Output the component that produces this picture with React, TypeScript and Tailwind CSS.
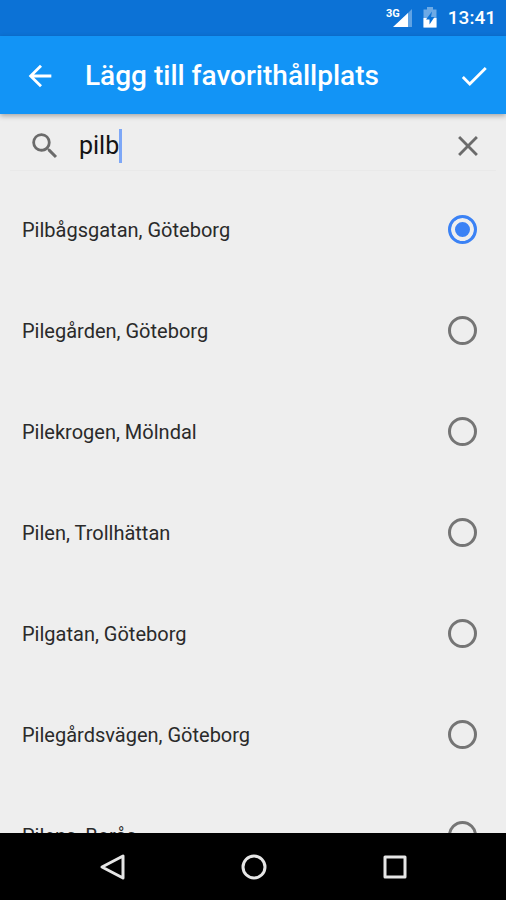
import React, { useState } from 'react';
import { MdArrowBack, MdCheck, MdClose, MdSearch } from 'react-icons/md';

const STOPS = [
  'Pilbågsgatan, Göteborg',
  'Pilegården, Göteborg',
  'Pilekrogen, Mölndal',
  'Pilen, Trollhättan',
  'Pilgatan, Göteborg',
  'Pilegårdsvägen, Göteborg',
  'Pilens, Borås',
];

function StatusBar() {
  return (
    <div className="flex h-9 shrink-0 items-center justify-end bg-[#0c72d6] pr-[10px] text-white">
      {/* Mobile signal */}
      <svg className="h-6 w-7" viewBox="0 0 28 24" aria-label="3G">
        <path d="M26 3v18H8z" fill="#fff" fillOpacity="0.35" />
        <path d="M22 7v14H7z" fill="#fff" />
        <text x="0" y="11" fontSize="11" fontWeight="700" fill="#fff" fontFamily="Roboto, sans-serif">
          3G
        </text>
      </svg>
      {/* Battery */}
      <svg className="ml-2 h-6 w-4" viewBox="0 0 16 24" aria-hidden="true">
        <path d="M5 1h6v2.500h3.500v18h-13v-18H5z" fill="#fff" fillOpacity="0.4" />
        <path d="M1.500 12h13v9.500h-13z" fill="#fff" />
        <path d="M10 5.500 4 13.500h3.500v5l5-7.500H9z" fill="#0c72d6" />
      </svg>
      <span className="ml-[10px] text-[19px] leading-6 font-medium">13:41</span>
    </div>
  );
}

function AppBar() {
  return (
    <header className="z-10 flex h-[78px] shrink-0 items-center bg-[#1294f6] pt-px pr-[15px] pl-[23px] text-white shadow-[0_2px_5px_rgba(0,0,0,0.3)]">
      <button type="button" aria-label="Tillbaka">
        <MdArrowBack className="size-[34px]" />
      </button>
      <h1 className="ml-7 flex-1 truncate text-[28px] leading-9 font-medium">Lägg till favorithållplats</h1>
      <button type="button" aria-label="Spara">
        <MdCheck className="size-[34px]" />
      </button>
    </header>
  );
}

function NavigationBar() {
  return (
    <nav className="flex h-[67px] shrink-0 items-center justify-center gap-[109px] bg-black pt-px pl-[2px]">
      <button type="button" aria-label="Bakåt">
        <svg className="size-8" viewBox="0 0 32 32" fill="none" stroke="#e6e6e6" strokeWidth="3" strokeLinejoin="round">
          <path d="M26 5v22L5 16z" />
        </svg>
      </button>
      <button type="button" aria-label="Hem">
        <svg className="size-8" viewBox="0 0 32 32" fill="none" stroke="#e6e6e6" strokeWidth="3">
          <circle cx="16" cy="16" r="11" />
        </svg>
      </button>
      <button type="button" aria-label="Översikt">
        <svg className="size-8" viewBox="0 0 32 32" fill="none" stroke="#e6e6e6" strokeWidth="3" strokeLinejoin="round">
          <path d="M6 6h20v20H6z" />
        </svg>
      </button>
    </nav>
  );
}

export default function App() {
  const [query, setQuery] = useState('pilb');
  const [selected, setSelected] = useState(STOPS[0]);

  return (
    <div className="flex h-screen flex-col overflow-hidden bg-[#eeeeee] font-[Roboto,sans-serif]">
      <StatusBar />
      <AppBar />

      {/* Search */}
      <div className="mx-[10px] flex h-[57px] shrink-0 items-center border-b border-[#e9e9e9] pt-[7px] pr-[11px] pl-[18px] text-[#6b6b6b]">
        <MdSearch className="size-[34px]" />
        <label className="flex flex-1 items-center pl-[17px]">
          <input
            type="text"
            aria-label="Sök hållplats"
            value={query}
            onChange={(e) => setQuery(e.target.value)}
            className="field-sizing-content text-[25px] leading-8 text-[#141414] caret-transparent outline-none"
          />
          <span className="h-[34px] w-[3px] bg-[#7da7f7]" />
        </label>
        <button type="button" aria-label="Rensa" onClick={() => setQuery('')}>
          <MdClose className="size-[34px]" />
        </button>
      </div>

      {/* Results */}
      <ul className="min-h-0 flex-1 overflow-hidden pt-2">
        {STOPS.map((stop) => (
          <li key={stop}>
            <label className="flex h-[101px] items-center justify-between pr-[29px] pl-[22px]">
              <span className="text-[20px] leading-6 text-[#2a2a2a]">{stop}</span>
              <input
                type="radio"
                name="stop"
                checked={selected === stop}
                onChange={() => setSelected(stop)}
                className="size-[29px] appearance-none rounded-full border-[3px] border-[#757575] checked:border-[#3b82f5] checked:bg-[#3b82f5] checked:shadow-[inset_0_0_0_4px_#eeeeee]"
              />
            </label>
          </li>
        ))}
      </ul>

      <NavigationBar />
    </div>
  );
}
